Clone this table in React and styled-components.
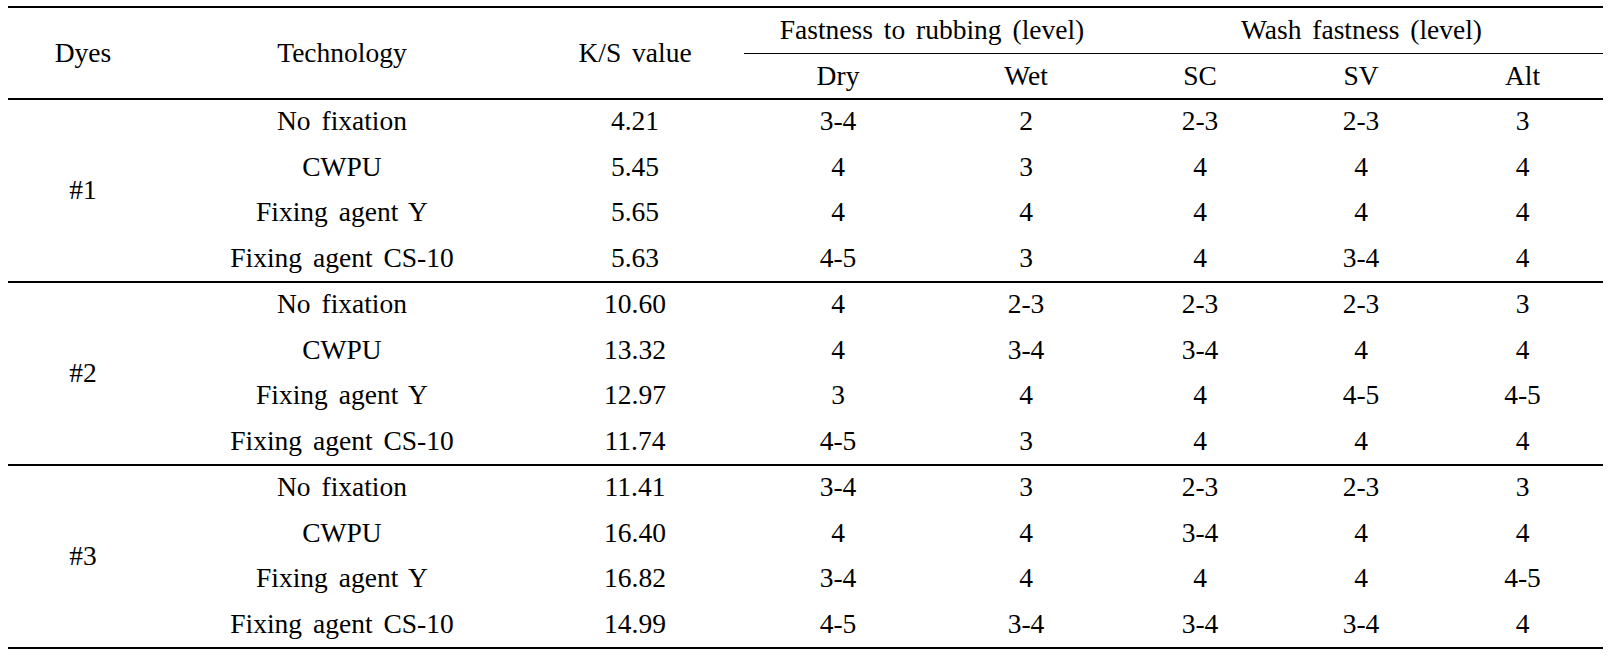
import React from 'react';
import styled, { createGlobalStyle } from 'styled-components';

const rows = [
  {
    dye: '#1',
    items: [
      ['No fixation', '4.21', '3-4', '2', '2-3', '2-3', '3'],
      ['CWPU', '5.45', '4', '3', '4', '4', '4'],
      ['Fixing agent Y', '5.65', '4', '4', '4', '4', '4'],
      ['Fixing agent CS-10', '5.63', '4-5', '3', '4', '3-4', '4'],
    ],
  },
  {
    dye: '#2',
    items: [
      ['No fixation', '10.60', '4', '2-3', '2-3', '2-3', '3'],
      ['CWPU', '13.32', '4', '3-4', '3-4', '4', '4'],
      ['Fixing agent Y', '12.97', '3', '4', '4', '4-5', '4-5'],
      ['Fixing agent CS-10', '11.74', '4-5', '3', '4', '4', '4'],
    ],
  },
  {
    dye: '#3',
    items: [
      ['No fixation', '11.41', '3-4', '3', '2-3', '2-3', '3'],
      ['CWPU', '16.40', '4', '4', '3-4', '4', '4'],
      ['Fixing agent Y', '16.82', '3-4', '4', '4', '4', '4-5'],
      ['Fixing agent CS-10', '14.99', '4-5', '3-4', '3-4', '3-4', '4'],
    ],
  },
];

const GlobalStyle = createGlobalStyle`
  body {
    margin: 6px 8px 0 8px;
    background: #fff;
    color: #000;
    font-family: "Liberation Serif", serif;
  }
`;

// Dyes | Technology | K/S | Dry | Wet | SC | SV | Alt
const COLS = '150px 360px 226px 188px 188px 160px 162px 161px';
// nudges so each column's text sits where the reference has it
const SHIFT = [8, 8, 0, 0, 0, 0, 0];

const Table = styled.div`
  width: 1595px;
  border-top: 2px solid #000;
  font-family: "Liberation Serif", "Times New Roman", serif;
  font-size: 27.5px;
  word-spacing: 4px;
`;

const Head = styled.div`
  display: grid;
  grid-template-columns: ${COLS};
  grid-template-rows: 45.5px 46.5px;
`;

const Group = styled.div`
  display: grid;
  grid-template-columns: ${COLS};
  grid-template-rows: repeat(4, 45.75px);
  border-bottom: 2px solid #000;
  height: 183px;
  box-sizing: border-box;
`;

const Cell = styled.div`
  display: flex;
  align-items: center;
  justify-content: center;
  box-sizing: border-box;
  white-space: nowrap;
  padding-left: ${p => (p.shift ? `${p.shift}px` : '0')};
  grid-row: ${p => p.rows || 'auto'};
  grid-column: ${p => p.cols || 'auto'};
  border-bottom: ${p => p.rule ? `${p.rule}px solid #000` : 'none'};
`;

const DataCell = styled(Cell)`
  padding-bottom: 4px;
`;

export default function App() {
  return (
    <>
      <GlobalStyle />
      <Table>
        <Head>
          <Cell rows="1 / span 2" cols="1" rule={2}>Dyes</Cell>
          <Cell rows="1 / span 2" cols="2" rule={2} shift={8}>Technology</Cell>
          <Cell rows="1 / span 2" cols="3" rule={2} shift={8}>K/S value</Cell>
          <Cell rows="1" cols="4 / span 2" rule={1.5}>Fastness to rubbing (level)</Cell>
          <Cell rows="1" cols="6 / span 3" rule={1.5}>Wash fastness (level)</Cell>
          <Cell rows="2" cols="4" rule={2}>Dry</Cell>
          <Cell rows="2" cols="5" rule={2}>Wet</Cell>
          <Cell rows="2" cols="6" rule={2}>SC</Cell>
          <Cell rows="2" cols="7" rule={2}>SV</Cell>
          <Cell rows="2" cols="8" rule={2}>Alt</Cell>
        </Head>
        {rows.map(g => (
          <Group key={g.dye}>
            <DataCell rows="1 / span 4" cols="1">{g.dye}</DataCell>
            {g.items.map((r, i) =>
              r.map((v, j) => (
                <DataCell key={`${i}-${j}`} rows={`${i + 1}`} cols={`${j + 2}`} shift={SHIFT[j]}>
                  {v}
                </DataCell>
              ))
            )}
          </Group>
        ))}
      </Table>
    </>
  );
}
